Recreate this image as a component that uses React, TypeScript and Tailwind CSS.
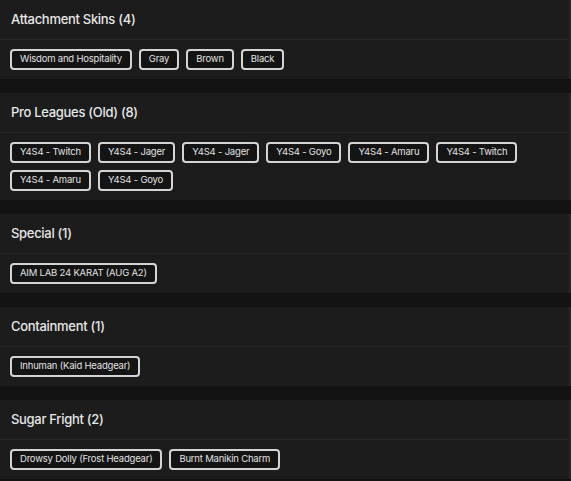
const sections: { title: string; items: string[] }[] = [
  {
    title: "Attachment Skins (4)",
    items: ["Wisdom and Hospitality", "Gray", "Brown", "Black"],
  },
  {
    title: "Pro Leagues (Old) (8)",
    items: [
      "Y4S4 - Twitch",
      "Y4S4 - Jager",
      "Y4S4 - Jager",
      "Y4S4 - Goyo",
      "Y4S4 - Amaru",
      "Y4S4 - Twitch",
      "Y4S4 - Amaru",
      "Y4S4 - Goyo",
    ],
  },
  { title: "Special (1)", items: ["AIM LAB 24 KARAT (AUG A2)"] },
  { title: "Containment (1)", items: ["Inhuman (Kaid Headgear)"] },
  {
    title: "Sugar Fright (2)",
    items: ["Drowsy Dolly (Frost Headgear)", "Burnt Manikin Charm"],
  },
];

export default function App() {
  return (
    <div className="flex min-h-screen flex-col gap-[14px] bg-[#131313] font-['Inter',sans-serif] proportional-nums">
      {sections.map((s) => (
        <section
          key={s.title}
          className="border-r-2 border-[#262626] bg-[#1c1c1c]"
        >
          <div className="flex h-[40px] items-center border-b border-[#262626] px-[11px] pt-[1px]">
            <h2 className="text-[13px] font-medium tracking-[-0.3px] text-[#e6e6e6]">
              {s.title}
            </h2>
          </div>
          <div className="flex flex-wrap gap-[7px] px-[10px] pb-[9px] pt-[9px]">
            {s.items.map((item, i) => (
              <span
                key={i}
                className="flex h-[21px] items-center rounded-[4px] border-2 border-[#d4d4d4] bg-[#141414] px-[8px] text-[9.5px] tracking-[-0.2px] text-[#e0e0e0]"
              >
                {item}
              </span>
            ))}
          </div>
        </section>
      ))}
    </div>
  );
}
